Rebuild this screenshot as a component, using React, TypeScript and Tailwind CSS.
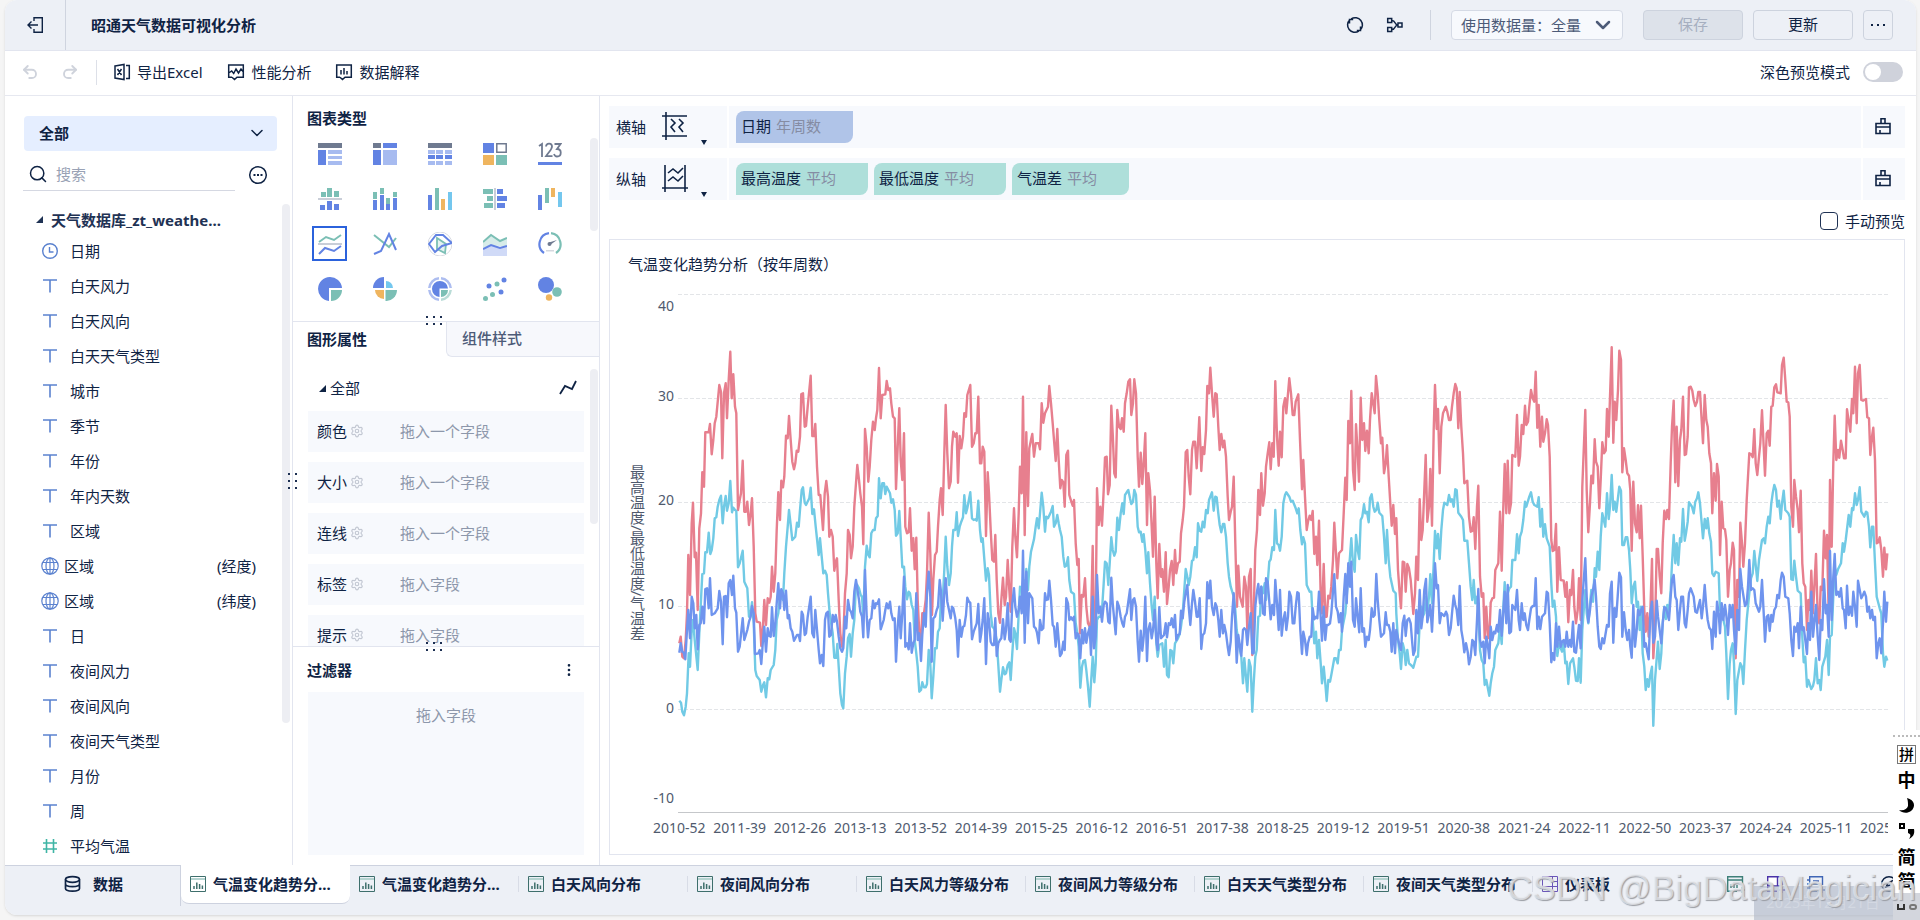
import { useState, type ReactNode } from 'react';
import { ChevronDown, Search, Undo2, Redo2, Settings, MoreVertical } from 'lucide-react';

type Block = { dx: number; dy: number; pts: string };

type Field = { name: string; kind: 'time' | 'text' | 'geo' | 'number'; suffix?: string };

const FIELDS: Field[] = [
  { name: '日期', kind: 'time' },
  { name: '白天风力', kind: 'text' },
  { name: '白天风向', kind: 'text' },
  { name: '白天天气类型', kind: 'text' },
  { name: '城市', kind: 'text' },
  { name: '季节', kind: 'text' },
  { name: '年份', kind: 'text' },
  { name: '年内天数', kind: 'text' },
  { name: '区域', kind: 'text' },
  { name: '区域', kind: 'geo', suffix: '(经度)' },
  { name: '区域', kind: 'geo', suffix: '(纬度)' },
  { name: '日', kind: 'text' },
  { name: '夜间风力', kind: 'text' },
  { name: '夜间风向', kind: 'text' },
  { name: '夜间天气类型', kind: 'text' },
  { name: '月份', kind: 'text' },
  { name: '周', kind: 'text' },
  { name: '平均气温', kind: 'number' },
];

const WEEKS = [
  '2010-52', '2011-39', '2012-26', '2013-13', '2013-52', '2014-39', '2015-25', '2016-12', '2016-51', '2017-38',
  '2018-25', '2019-12', '2019-51', '2020-38', '2021-24', '2022-11', '2022-50', '2023-37', '2024-24', '2025-11',
];

const SHEETS = [
  '气温变化趋势分析', '气温变化趋势分布', '白天风向分布', '夜间风向分布', '白天风力等级分布',
  '夜间风力等级分布', '白天天气类型分布', '夜间天气类型分布',
];

// weekly averages, three points per pixel, in blocks of several years
const HIGH: Block[] = [
  { dx: -78, dy: -14, pts: '238,1090 242,1070 247,1130 252,1135 257,1080 261,1000 265,825 270,945 275,730 279,668 284,832 288,818 293,990 298,745 303,700 307,577 312,620 316,457 326,457 330,432 335,523 340,480 344,430 349,410 358,315 363,335 367,535 372,340 377,310 381,415 386,300 391,215 395,355 400,283 405,380 409,400 414,690 419,660 423,640 428,542 433,695 438,695 442,665 447,735 452,700 456,655 461,800 466,1000 470,1025 480,1028 484,1098 489,1040 493,960 498,1035 503,955 508,968 512,950 516,860 521,935 526,880 530,750 535,637 540,720 544,602 549,622 553,590 558,467 563,475 567,408 572,480 577,545 582,568 586,550 590,512 595,515 600,470 604,342 609,340 614,440 618,438 623,380 632,287 637,468 642,468 646,432 651,560 656,645 661,645 669,750 674,640 679,603 684,650 688,770 693,750 698,770 703,872 707,845 711,835 716,960 721,1060 726,1100 730,1075 735,940 740,880 744,750 749,765 753,835 758,800 763,680 772,555 777,600 781,640 786,680 790,793 795,447 800,500 805,605 809,560 814,480 819,425 824,450 828,415 832,390 837,264 842,415 847,345 856,343 860,303 865,330 870,325 874,370 879,410 884,415 888,627 893,500 898,385 902,540 907,600 912,460 916,740 921,760 926,757 930,685 935,812 940,775 944,868 949,773 953,960 958,1060 963,1080 967,1000 972,1000 977,960 981,880 986,698 991,820 996,1005 1000,900 1005,825 1010,815 1014,740 1019,660 1023,625 1028,705 1033,520 1037,375 1042,520 1047,625 1052,605 1056,500 1060,455 1066,470 1070,460 1074,608 1079,468 1084,505 1089,470 1093,400 1098,410 1102,345 1111,315 1116,500 1121,490 1126,460 1130,460 1135,350 1140,550 1144,550 1148,500 1153,515 1158,768 1163,577 1167,640 1172,750 1177,840 1182,845 1186,765 1190,900 1195,1000 1200,1028 1204,960 1209,893 1214,975 1218,950 1223,840 1228,930 1232,995 1237,800 1242,685 1246,770 1251,832 1256,700 1260,560 1265,640 1269,350 1274,765 1279,457 1284,678 1288,505 1293,480 1297,462 1302,530 1307,490 1316,490 1320,508 1325,370 1330,428 1335,400 1344,380 1348,318 1353,370 1358,430 1362,480 1367,543 1372,447 1376,540' },
  { dx: 382, dy: 36, pts: '1,475 5,450 10,457 14,530 19,375 24,362 28,495 33,512 38,527 42,510 47,640 52,705 56,687 60,910 65,795 70,800 75,745 79,830 84,880 89,890 93,870 98,648 102,950 107,850 111,475 116,585 121,530 126,587 131,480 135,382 140,380 144,493 149,465 154,227 158,310 163,430 167,442 172,240 177,290 182,297 186,265 191,305 195,220 200,190 205,155 210,148 214,255 219,220 223,148 228,190 233,380 237,470 242,368 247,462 251,400 256,310 261,585 265,430 270,480 275,590 279,680 284,500 289,700 293,805 298,642 303,740 307,718 312,785 317,667 321,822 326,770 330,720 335,693 340,765 345,660 349,730 354,700 359,695 363,610 368,570 372,530 377,367 382,360 386,440 391,493 396,360 400,335 405,335 410,415 414,340 418,262 424,423 428,352 433,372 438,300 442,168 447,190 451,113 456,190 461,260 466,190 470,193 475,290 479,360 484,312 489,352 493,332 498,380 503,500 507,570 512,545 516,530 521,440 526,640 531,830 535,707 540,800 548,830 553,740 558,770 562,900 567,740 572,717 577,975 581,850 586,660 591,600 595,480 600,555 604,430 609,527 614,490 618,410 623,370 628,337 632,418 637,340 641,380 646,154 651,320 656,407 660,305 665,382 670,230 675,205 679,250 688,145 693,190 698,255 703,255 707,215 715,193 720,330 726,478 730,390 735,500 740,600 744,575 749,557 754,570 758,543 763,672 768,620 772,705 777,572 782,800 786,850 791,702 796,860 800,860 805,797 810,805 814,770 819,690 823,578 828,670 832,745 837,670 846,660 851,550 856,443 860,510 865,273 870,340 874,183 879,420 884,480 888,283 893,370 897,455 902,203 907,330 912,280 916,363 921,302 926,370 930,270 935,190 944,250 948,138 953,190 958,270 963,340 967,323 972,430 977,400 981,346 986,440 991,520 995,587 1000,525 1005,612 1009,565 1014,720 1019,790 1023,835 1028,695 1033,697 1037,785 1042,702 1047,715 1052,750 1056,800 1060,852 1065,790 1069,680 1074,750 1079,508 1084,630 1088,600 1093,480 1097,375 1102,575 1107,530 1111,417 1116,587 1121,300 1125,165 1130,297 1134,237 1139,430 1144,290 1149,250 1157,230 1162,245 1167,270 1172,270 1176,230 1181,190 1186,162 1190,175 1195,295 1199,186 1204,290 1209,370 1213,460 1222,452 1227,560 1232,605 1237,603 1241,562 1246,657 1251,530 1255,467 1260,740 1265,800 1270,790 1274,925 1279,830 1284,925 1288,920 1292,818 1297,805 1302,803 1306,720 1315,700 1320,545 1325,722 1329,560 1334,402 1339,550 1343,392 1348,550 1353,520 1357,375 1366,380 1371,255 1376,407' },
  { dx: 802, dy: 36, pts: '120,380 125,285 130,312 135,227 139,285 144,275 148,230 153,180 158,205 163,215 167,125 172,293 176,225 181,350 186,260 190,335 195,310 200,268 204,285 209,380 214,630 218,663 223,660 228,582 232,785 237,652 242,750 251,752 256,800 260,757 265,877 270,780 274,795 279,720 283,830 288,880 293,840 297,745 302,870 307,470 316,240 320,480 325,607 330,520 334,437 339,460 344,328 348,395 353,410 358,535 362,450 367,337 372,370 377,362 381,237 386,320 390,200 395,52 400,338 404,215 409,270 414,180 418,62 423,90 427,427 432,355 437,390 442,430 447,437 451,480 455,662 460,455 465,580 470,607 474,526 479,625 483,527 488,680 493,840 497,905 502,850 506,920 511,850 516,687 520,985 525,900 530,657 534,657 539,740 544,790 548,640 553,542 558,567 562,540 567,567 572,400 576,290 581,212 586,457 590,290 595,468 600,330 604,300 609,200 614,375 618,373 623,320 627,172 632,170 637,182 641,210 646,228 651,215 655,186 660,186 669,340 674,195 679,270 683,290 688,370 693,400 697,550 702,430 707,512 711,402 716,440 720,675 725,515 730,595 735,598 739,630 744,800 749,720 753,700 758,638 762,660 767,985 772,750 777,800 781,578 786,640 790,710 795,640 800,510 808,370 813,372 818,382 823,298 827,400 832,435 837,380 841,340 846,241 851,350 855,437 860,310 865,302 869,347 874,230 878,227 883,172 888,163 892,187 902,190 906,105 911,83 916,150 920,215 925,217 929,260 934,530 939,590 943,450 948,500 953,540 957,607 962,482 967,700 971,760 976,770 981,900 985,810 990,840 994,722 999,850 1008,672 1013,860 1018,880 1022,770 1027,780 1032,602 1037,685 1041,615 1046,860 1050,450 1055,650 1060,400 1064,257 1069,390 1074,360 1078,383 1083,332 1088,360 1092,385 1097,385 1101,238 1111,305 1116,207 1120,250 1125,110 1130,280 1134,130 1139,105 1144,210 1149,212 1158,207 1162,262 1167,265 1171,375 1176,320 1180,293 1185,390 1190,640 1195,637 1199,622 1204,660 1209,740 1213,653 1218,718 1222,670' },
];

const LOW: Block[] = [
  { dx: -78, dy: -14, pts: '238,1262 243,1268 247,1295 252,1306 257,1280 261,1240 266,1120 270,1160 275,1050 279,1020 284,1080 293,1170 298,1060 303,960 307,882 312,880 316,817 321,817 326,758 331,822 335,810 340,775 344,715 349,712 353,680 358,660 363,647 368,730 372,680 377,648 381,692 386,670 391,603 396,697 400,683 405,690 409,692 414,862 419,850 428,812 433,905 442,925 447,1010 452,1000 456,967 461,1030 466,1170 470,1188 479,1200 484,1235 489,1215 493,1207 498,1252 503,1195 508,1198 512,1170 521,1155 526,1110 530,1020 535,1000 540,950 549,960 553,880 558,800 563,740 567,690 572,735 577,780 586,770 591,728 596,740 600,690 605,630 609,622 614,668 618,675 628,655 632,623 637,702 642,688 647,740 656,825 660,775 665,830 670,880 675,872 680,885 684,940 689,1000 698,1060 703,1133 709,1133 712,1092 716,1160 721,1240 726,1275 730,1285 735,1180 740,1130 744,1075 749,1062 753,1130 758,1060 763,1020 768,912 772,915 777,925 782,945 786,950 790,1010 795,860 800,797 805,825 809,832 814,760 819,750 824,750 828,715 833,708 837,595 842,655 847,610 852,610 856,642 860,620 870,640 874,668 879,658 884,690 888,767 893,760 898,693 902,770 907,862 912,860 916,920 921,958 926,935 930,940 935,975 940,990 944,1080 949,1120 953,1160 958,1235 963,1230 967,1207 972,1222 977,1222 981,1212 986,1110 991,1150 995,1255 1000,1190 1005,1105 1010,1105 1014,1055 1019,1045 1023,950 1028,960 1033,870 1037,770 1042,860 1047,915 1052,880 1056,800 1060,750 1066,750 1070,697 1074,768 1079,740 1084,725 1089,712 1093,646 1098,700 1102,685 1111,637 1116,715 1121,720 1126,718 1130,722 1135,662 1140,750 1144,785 1148,775 1158,902 1163,865 1167,885 1172,1000 1177,1040 1182,1045 1186,1060 1190,1080 1200,1235 1204,1200 1209,1162 1214,1183 1218,1180 1223,1155 1228,1147 1232,1200 1237,1120 1242,1045 1246,1060 1251,1107 1256,1000 1260,920 1265,930 1270,900 1274,960 1279,867 1284,930 1288,860 1293,815 1302,778 1307,740 1311,715 1316,745 1320,700 1325,638 1330,680 1335,755 1339,710 1344,715 1353,695 1358,678 1362,740 1367,730 1372,705 1376,730' },
  { dx: 382, dy: 36, pts: '0,600 5,620 10,680 14,710 19,707 24,682 28,750 33,785 42,792 47,880 52,910 56,950 61,1073 66,1010 70,993 75,990 79,1020 84,1070 89,1130 93,1060 98,980 103,1057 107,1000 111,870 116,860 121,860 126,840 131,760 135,695 140,700 145,765 149,700 154,622 158,660 163,677 167,665 172,563 177,600 182,550 187,520 191,552 195,495 200,487 205,480 210,505 214,522 219,515 223,480 228,495 233,590 237,607 242,605 247,635 251,613 256,660 261,730 265,667 270,760 275,830 279,870 284,800 289,940 293,980 298,945 307,940 312,1010 317,930 321,1035 326,1042 331,960 335,962 340,1000 345,940 354,925 359,912 363,890 368,850 373,780 377,717 382,740 386,765 391,740 396,692 400,690 405,652 410,682 414,580 419,602 424,605 428,575 433,592 438,540 443,550 447,510 456,487 461,542 466,500 470,502 475,550 479,585 484,607 489,582 493,582 498,620 503,700 507,740 512,770 521,800 526,840 530,900 535,930 540,960 544,980 549,1060 553,985 562,1085 567,990 572,1010 577,1145 581,1060 586,980 590,960 595,860 600,857 604,770 609,790 614,760 618,810 623,760 628,695 632,688 637,652 642,660 646,540 651,640 656,645 660,662 665,620 670,520 675,495 679,487 688,500 693,515 698,512 707,535 712,550 716,535 721,600 726,643 730,622 735,640 740,765 749,785 754,785 758,870 763,940 768,905 772,985 777,930 782,1000 786,1060 791,1010 796,1060 800,1113 805,1050 810,1055 814,1035 823,985 828,985 833,1000 837,960 842,960 846,900 856,850 860,800 865,740 870,680 874,625 879,700 884,725 888,615 893,660 898,687 902,570 907,560 912,523 916,550 921,545 926,577 930,505 935,493 940,530 944,545 949,540 953,518 958,548 967,558 972,620 977,700 981,600 986,690 991,740 1000,782 1007,790 1009,850 1014,930 1019,970 1023,1017 1028,940 1033,960 1037,1005 1042,960 1047,1000 1056,1008 1060,1013 1069,980 1074,980 1079,880 1084,830 1088,860 1093,850 1098,800 1102,850 1107,800 1111,733 1116,820 1121,700 1125,603 1130,655 1134,612 1139,687 1144,600 1149,540 1153,518 1162,525 1167,495 1172,515 1176,508 1181,530 1186,478 1190,480 1195,548 1204,560 1209,570 1213,632 1222,632 1227,700 1232,770 1237,810 1241,750 1246,820 1251,800 1255,850 1260,960 1265,990 1270,1000 1274,1065 1279,1050 1288,1097 1292,1060 1297,1030 1302,1010 1306,960 1315,940 1320,890 1325,942 1329,850 1334,757 1339,855 1343,790 1348,775 1353,770 1357,690 1366,690 1371,613 1376,670' },
  { dx: 802, dy: 36, pts: '120,620 125,605 130,570 135,515 139,530 148,500 153,487 158,515 163,525 167,527 172,530 176,502 181,590 186,537 190,620 195,583 200,625 209,650 214,760 218,830 223,812 228,860 232,978 237,940 246,965 251,935 256,1000 260,995 265,1062 270,1000 279,985 283,1010 288,1052 293,1053 297,985 302,1058 307,900 312,830 316,780 320,850 325,880 334,780 339,815 344,715 348,740 353,665 358,720 362,620 367,550 376,590 381,490 386,567 390,530 395,435 400,540 404,515 409,545 418,470 423,482 427,645 432,645 437,622 442,622 447,660 451,720 455,820 460,770 465,755 470,830 474,815 479,900 483,830 488,970 493,1010 497,1080 502,1048 506,1070 511,1035 516,1010 520,1187 525,1050 530,985 534,935 539,1017 544,970 548,880 553,830 558,867 562,825 567,845 572,780 576,700 581,615 586,700 590,640 595,705 600,625 604,635 609,537 614,632 618,610 623,575 627,517 636,530 641,550 646,515 651,505 655,487 660,520 669,625 674,567 679,595 683,565 688,610 693,635 697,730 702,738 707,725 716,730 720,840 725,850 735,890 739,970 744,1107 749,1000 753,960 758,940 762,1000 767,1152 772,1050 781,1000 786,1010 790,1062 795,960 800,870 808,790 813,745 818,730 823,663 832,753 837,690 846,630 851,625 855,640 860,590 865,560 869,580 874,520 878,490 883,465 888,480 892,530 897,512 902,567 906,520 911,482 916,540 925,550 929,560 934,748 939,750 943,692 948,740 953,782 962,790 967,920 971,997 976,980 981,1070 985,1050 994,1077 999,1068 1003,1050 1008,985 1013,1060 1018,1050 1022,1080 1027,1010 1036,980 1041,930 1046,1035 1050,920 1055,915 1060,800 1064,710 1069,735 1074,718 1083,700 1088,640 1092,665 1097,630 1106,555 1111,590 1116,535 1120,540 1125,490 1130,525 1134,510 1139,472 1144,545 1153,560 1158,545 1162,548 1167,590 1171,652 1176,590 1180,590 1185,700 1190,800 1199,835 1204,850 1209,970 1213,1010 1218,980 1222,992' },
];

const DIFF: Block[] = [
  { dx: -78, dy: -14, pts: '238,1118 242,1090 247,1115 251,1118 256,1138 261,1050 265,990 270,1075 275,950 280,970 284,1045 289,1005 293,1108 298,1035 302,1030 307,980 312,1030 316,927 321,925 326,985 330,895 335,1005 344,1000 353,985 358,933 363,965 368,1093 372,950 377,948 381,1012 386,910 391,900 396,945 400,887 405,985 409,998 414,1115 419,1100 428,1015 433,1080 442,1050 447,1025 452,1010 456,978 461,1000 465,1122 475,1120 479,1110 484,1152 489,1080 493,1040 498,1115 503,1045 508,1068 512,1070 516,982 521,1068 526,1030 530,970 535,910 540,985 544,928 549,940 553,990 558,932 563,1015 567,1005 572,1045 577,1055 582,1082 591,1065 596,1065 600,1083 605,995 609,1005 614,1065 618,1060 623,1010 632,950 637,1060 642,1072 646,990 651,1050 656,1110 660,1150 665,1125 670,1158 675,1020 679,1000 684,995 688,1070 693,1065 698,1005 703,1025 707,1005 711,1025 716,1070 721,1105 726,1115 730,1105 735,1010 739,1045 744,960 749,990 753,995 758,1015 763,935 768,900 777,960 781,995 786,1010 790,1072 795,870 800,1010 804,1072 809,1020 814,1015 819,962 824,985 828,970 832,972 837,958 842,1048 851,1020 856,990 860,970 865,985 870,965 874,1000 879,1020 884,1015 888,1145 893,1040 898,980 902,1075 907,1000 912,890 916,1100 921,1090 926,1108 930,1030 935,1118 940,1090 944,1080 949,940 953,1080 958,1060 963,1143 967,1065 972,1000 977,1040 981,940 986,875 991,950 995,1145 1000,1015 1005,1010 1010,990 1014,980 1019,900 1023,935 1028,1022 1033,940 1037,895 1042,965 1047,990 1052,1015 1056,980 1060,985 1066,1015 1070,1050 1074,1130 1079,1020 1084,1070 1089,1040 1093,1038 1098,1005 1102,953 1107,965 1111,968 1116,1078 1121,1055 1130,1030 1135,972 1140,1085 1144,1060 1148,1020 1153,955 1158,1152 1163,1000 1167,1020 1172,1085 1177,1095 1182,1095 1186,1015 1190,1128 1195,1090 1200,1080 1204,1075 1209,1018 1214,1078 1218,1050 1223,970 1228,1078 1232,1085 1237,970 1242,925 1246,980 1251,1010 1256,990 1260,950 1265,1000 1269,812 1274,1088 1279,875 1284,1030 1288,940 1297,955 1302,1040 1307,1045 1311,1058 1316,1090 1320,1020 1325,1050 1330,1045 1335,940 1339,960 1344,958 1348,902 1353,960 1358,1035 1362,1040 1367,1100 1372,1030 1376,1080' },
  { dx: 382, dy: 36, pts: '0,978 5,970 10,935 14,960 19,805 24,820 28,870 33,862 38,870 42,860 47,925 52,910 56,915 61,985 66,900 70,940 75,895 79,938 84,910 89,890 93,975 98,800 102,955 107,920 111,735 116,850 121,830 126,875 131,825 135,815 140,820 145,875 149,880 154,743 158,820 163,870 167,913 172,815 177,830 182,860 187,880 191,890 195,860 200,850 205,815 210,778 214,870 219,810 223,805 228,830 233,935 237,995 242,902 247,962 251,920 256,800 261,993 265,900 270,880 275,925 279,900 284,840 289,930 293,960 298,832 303,925 312,915 317,880 321,922 326,880 331,885 335,865 340,892 345,855 349,930 354,915 359,912 363,842 368,865 373,815 377,790 382,765 386,830 391,885 396,820 400,780 405,815 410,860 414,860 419,805 424,957 428,915 433,910 438,880 442,757 447,805 451,752 456,830 461,855 466,820 470,830 475,870 479,920 484,840 489,910 493,885 498,910 503,950 507,975 512,935 516,860 521,790 526,880 530,998 535,915 544,977 549,900 553,895 558,900 562,945 567,890 572,850 577,970 581,970 586,830 590,790 595,762 600,820 604,770 609,850 614,855 618,745 623,755 628,815 632,868 637,825 642,855 646,750 651,820 656,900 660,780 665,917 670,870 675,847 679,900 684,860 688,785 693,800 698,880 703,880 707,830 712,787 716,790 721,900 726,972 730,905 735,930 740,975 744,940 749,920 754,920 758,835 763,868 768,860 772,865 777,785 782,860 786,932 791,830 796,930 800,885 805,885 810,880 814,850 823,733 828,830 833,845 837,877 842,850 846,905 851,800 856,732 860,820 865,700 870,770 874,695 879,870 884,890 888,805 893,860 898,907 902,775 907,905 912,895 916,950 921,920 926,930 930,900 935,835 940,860 944,855 949,732 953,810 958,870 963,920 972,910 977,847 981,885 986,885 991,905 995,965 1000,880 1005,970 1009,900 1014,925 1019,950 1023,960 1028,880 1033,857 1037,918 1042,870 1047,865 1052,880 1056,930 1060,975 1065,960 1069,840 1074,910 1079,780 1084,895 1088,860 1093,780 1098,747 1102,877 1107,850 1111,825 1116,905 1121,800 1125,700 1130,775 1134,765 1139,880 1144,850 1153,858 1158,845 1162,855 1167,915 1172,895 1176,850 1181,797 1186,825 1190,840 1195,885 1199,768 1204,900 1209,930 1213,967 1218,940 1223,965 1227,1003 1232,980 1237,930 1241,935 1246,975 1251,870 1255,777 1260,930 1265,950 1270,935 1274,1000 1279,920 1284,950 1288,985 1292,890 1297,930 1302,905 1306,910 1311,885 1315,905 1320,840 1325,917 1329,860 1334,785 1339,880 1343,765 1348,910 1353,905 1357,825 1366,840 1371,780 1376,870' },
  { dx: 802, dy: 36, pts: '120,900 125,820 130,870 134,850 139,885 144,900 148,870 153,835 158,828 163,828 167,745 172,897 176,860 181,897 186,860 195,850 200,785 204,790 209,880 214,997 218,970 223,990 228,880 232,950 237,890 242,950 246,935 251,930 256,950 260,905 265,950 270,930 274,950 279,875 283,965 288,968 293,920 297,885 302,955 307,810 316,685 320,800 325,877 330,840 334,800 339,780 344,750 348,800 353,890 358,950 362,957 367,925 372,940 381,885 386,890 390,790 395,755 400,938 404,835 409,860 418,728 423,742 427,920 432,847 437,900 442,930 447,900 451,950 455,983 460,825 465,950 470,900 474,840 479,855 483,840 488,830 493,950 497,940 506,988 511,850 516,815 520,938 525,920 530,812 534,860 544,940 548,880 553,832 558,835 562,850 567,870 572,800 576,750 581,735 586,800 590,810 595,900 600,840 604,800 609,800 614,880 618,892 623,840 627,790 632,775 641,800 646,845 651,848 655,830 660,810 665,865 669,830 674,765 679,830 683,870 688,893 693,900 697,957 702,845 707,920 711,815 716,850 720,910 725,820 730,870 735,825 739,855 744,915 749,825 753,862 758,825 762,900 767,972 772,840 777,900 781,717 786,770 795,828 800,820 804,770 808,690 813,780 818,775 823,780 827,820 837,845 841,830 846,750 851,850 855,935 860,860 865,855 869,903 874,855 878,875 883,840 888,830 892,795 897,805 902,750 906,728 911,740 916,800 925,805 929,850 934,930 939,978 943,890 948,905 953,880 957,955 962,830 967,900 971,892 976,930 981,972 985,880 990,930 994,785 999,920 1008,825 1013,920 1018,990 1022,870 1027,900 1032,748 1037,850 1041,825 1046,920 1050,663 1055,870 1060,740 1064,672 1069,795 1074,785 1078,800 1083,775 1088,835 1092,840 1097,895 1101,767 1106,855 1111,830 1116,857 1120,785 1125,830 1130,890 1134,752 1139,780 1144,805 1149,795 1153,785 1158,800 1162,845 1167,830 1171,865 1176,840 1180,870 1185,860 1190,985 1195,940 1199,925 1204,970 1209,880 1213,785 1218,875 1222,815' },
];

const toPoints = (blocks: Block[]) =>
  blocks
    .flatMap(({ dx, dy, pts }) =>
      pts.split(' ').map((p) => {
        const [x, y] = p.split(',').map(Number);
        return `${(x / 3 + dx).toFixed(1)},${(y / 3 + dy).toFixed(1)}`;
      })
    )
    .join(' ');

const B = '#6283e3';
const L = '#a7bbf0';
const G = '#7bbfb5';
const O = '#efb55f';
const C = '#74c7ee';
const D = '#6f7a90';

const CHART_TYPES: { name: string; icon: ReactNode }[] = [
  { name: '分组表', icon: <><path fill={D} d="M0 1h24v5H0z" /><path fill={B} d="M0 8h8v15H0z" /><path fill={L} d="M10 8h14v4H10zM10 14h14v3H10zM10 19h14v4H10z" /></> },
  { name: '交叉表', icon: <><path fill={D} d="M0 1h8v5H0z" /><path fill={B} d="M10 1h14v5H10zM0 8h8v15H0z" /><path fill={L} d="M10 8h14v15H10z" /></> },
  { name: '明细表', icon: <><path fill={D} d="M0 1h24v5H0z" /><path fill={L} d="M0 8h7v4H0zM8 8h7v4H8zM17 8h7v4h-7zM0 19h7v4H0zM8 19h7v4H8zM17 19h7v4h-7z" /><path fill={B} d="M0 13h7v4H0zM8 13h7v4H8zM17 13h7v4h-7z" /></> },
  { name: '颜色表格', icon: <><path fill={B} d="M0 1h11v10H0z" /><path fill="none" stroke={D} strokeWidth="1.5" d="M13.8 1.8h9.4v8.4h-9.4z" /><path fill={O} d="M0 13h11v10H0z" /><path fill={G} d="M13 13h11v10H13z" /></> },
  { name: '指标卡', icon: <><path fill="none" stroke={D} strokeWidth="1.8" d="M1 4l3-2v13M8 4.500c.5-4 6-3.500 6 0 0 3-3 5-6 9.700h6.500M16.500 2h6l-3.500 5c5 0 5 7.500 0 7.500-1.500 0-2.500-1-3-2.500" /><path fill={B} d="M0 20h24v3H0z" /></> },
  { name: '对比柱状图', icon: <><path fill={G} d="M3 5h5v5H3zM9 1h5v9H9zM16 4h5v6h-5z" /><path fill="#c9ced8" d="M0 11h24v2H0z" /><path fill={B} d="M2 18h5v5H2zM9 14h5v9H9zM16 17h5v6h-5z" /></> },
  { name: '堆积柱状图', icon: <><path fill={G} d="M0 5h4v7H0zM7 1h4v6H7zM13 11h4v6h-4zM20 5h4v5h-4z" /><path fill={B} d="M0 13h4v10H0zM7 8h4v15H7zM13 17h4v6h-4zM20 11h4v12h-4z" /></> },
  { name: '分区柱形图', icon: <><path fill={B} d="M0 8h4v15H0z" /><path fill={G} d="M7 1h4v22H7z" /><path fill={O} d="M13 12h4v11h-4z" /><path fill={C} d="M20 5h4v18h-4z" /></> },
  { name: '对比条形图', icon: <><path fill={G} d="M0 2h10v5H0zM4 9h6v5H4zM1 16h9v5H1z" /><path fill="#c9ced8" d="M11 1h2v22h-2z" /><path fill={B} d="M14 2h6v5h-6zM14 9h10v5H14zM14 16h8v5h-8z" /></> },
  { name: '瀑布图', icon: <><path fill={B} d="M0 8h4v15H0z" /><path fill={G} d="M7 1h4v15H7z" /><path fill={O} d="M13 1h4v9h-4z" /><path fill={C} d="M20 5h4v15h-4z" /></> },
  { name: '分区折线图', icon: <><path fill="#c9ced8" d="M0 11h24v2H0z" /><g fill="none" strokeWidth="2"><path stroke={G} d="M1 10l7-5 8 3 7-5" /><path stroke={B} d="M1 22l6-6 9 3 7-5" /></g></> },
  { name: '多系列折线图', icon: <g fill="none" strokeWidth="2"><path stroke={G} d="M1 3l15 12 7-9" /><path stroke={B} d="M1 22l7-3 8-17 7 16" /></g> },
  { name: '雷达图', icon: <g fill="none"><circle cx="12" cy="12" r="12" stroke="#d8dbe2" /><path fill={G} fillOpacity=".2" stroke={G} strokeWidth="1.8" d="M9 6l9 6-1 9-8-4z" /><path stroke={B} strokeWidth="2" d="M8 3h7l9 8-10 3-7 6-6-8z" /></g> },
  { name: '面积图', icon: <><path fill={G} fillOpacity=".3" d="M0 10l8-7 9 6 7-3v9L8 13l-8 3z" /><path fill={B} fillOpacity=".3" d="M0 17l8-4 9 3 7-2v10H0z" /><g fill="none" strokeWidth="2"><path stroke={G} d="M0 10l8-7 9 6 7-3" /><path stroke={B} d="M0 17l8-4 9 3 7-2" /></g></> },
  { name: '仪表盘', icon: <><g fill="none" strokeWidth="2.200"><path stroke={B} d="M6 21A11 11 0 0 1 11 1.200" /><path stroke={G} d="M13 1.200A11 11 0 0 1 18 21" /></g><circle cx="11.500" cy="12" r="2" fill={D} /><path fill={D} d="M11 10.500l8-2.500-7 5z" /><path fill="#d5d8df" d="M8 18h8v1.500H8z" /></> },
  { name: '饼图', icon: <><path fill={B} d="M11 12v12A12 12 0 1 1 24 11H11z" /><path fill={G} d="M13 13h11a11 11 0 0 1-11 11z" /></> },
  { name: '玫瑰图', icon: <><path fill={B} d="M11 11V0A11 11 0 0 0 0 11z" /><path fill={C} d="M13 11V4a7 7 0 0 1 7 7z" /><path fill={O} d="M11 13v9a9 9 0 0 1-9-9z" /><path fill={G} d="M12.500 13H24a11 11 0 0 1-11.500 11z" /></> },
  { name: '多层饼图', icon: <><g fill="none" strokeWidth="2.500"><path stroke="#adbdf0" d="M11 22.700A10.700 10.700 0 0 1 1.300 13M1.300 11A10.700 10.700 0 0 1 11 1.300M13 1.300A10.700 10.700 0 0 1 22.700 11" /><path stroke="#b9dcd7" d="M22.700 13A10.700 10.700 0 0 1 13 22.700" /></g><path fill={B} d="M11.500 12v8A8 8 0 1 1 20 11.500h-8.500z" /><path fill={G} d="M13 13h7a7 7 0 0 1-7 7z" /></> },
  { name: '散点图', icon: <><g fill={B}><circle cx="21" cy="3" r="2.500" /><circle cx="6" cy="9" r="2.500" /><circle cx="18" cy="15" r="2.500" /></g><g fill={G}><circle cx="14" cy="7" r="2.500" /><circle cx="9.500" cy="17.500" r="2.500" /><circle cx="2.500" cy="21.500" r="2.500" /></g></> },
  { name: '气泡图', icon: <><circle cx="8" cy="8" r="8" fill={B} /><circle cx="19" cy="15" r="4.800" fill={G} /><circle cx="11" cy="20.500" r="3.200" fill={O} /></> },
];

function Svg({ size = 16, children }: { size?: number; children: ReactNode }) {
  return (
    <svg width={size} height={size} viewBox={`0 0 ${size} ${size}`} fill="none" stroke="currentColor" className="shrink-0 overflow-visible" aria-hidden="true">
      {children}
    </svg>
  );
}

function FieldIcon({ kind }: { kind: Field['kind'] }) {
  if (kind === 'time') return <Svg><circle cx="8" cy="8" r="7.300" strokeWidth="1.400" /><path strokeWidth="1.400" d="M7.500 4v5h4" /></Svg>;
  if (kind === 'text') return <Svg><path strokeWidth="1.600" d="M1 2h14M8 2v12.500" /></Svg>;
  if (kind === 'number') return <Svg><path strokeWidth="1.600" d="M4.500 1v14M11.500 1v14M1 5h14M1 11h14" /></Svg>;
  return (
    <Svg>
      <circle cx="8" cy="8" r="8.200" strokeWidth="1.200" />
      <ellipse cx="8" cy="8" rx="4" ry="8.200" strokeWidth="1.200" />
      <path strokeWidth="1.200" d="M8 0v16M1 4.500h14M1 11.500h14" />
    </Svg>
  );
}

function BrushIcon() {
  return <Svg><path strokeWidth="1.600" d="M5 5.500V.8h4v4.700M0 5.500h14v10H0zM0 9h14M4 12v3" /></Svg>;
}

function SheetIcon() {
  return (
    <Svg>
      <path stroke="#3e6f6c" d="M.5.500h15v15H.5z" />
      <path stroke="#b5d3d0" strokeWidth="2" d="M1 3h14" />
      <path stroke="#3e6f6c" strokeWidth="1.500" d="M4 13v-3M6.800 13V6.500M9.600 13V8M12.400 13v-3.500" />
    </Svg>
  );
}

function Triangle() {
  return <svg width="7" height="7" className="shrink-0 fill-current" aria-hidden="true"><path d="M7 0v7H0z" /></svg>;
}

function Dots({ rows, cols }: { rows: number; cols: number }) {
  return (
    <svg width={cols * 7} height={rows * 7} aria-hidden="true" className="fill-[#1c2f52]">
      {Array.from({ length: rows * cols }, (_, i) => (
        <rect key={i} x={(i % cols) * 7 + 2} y={Math.floor(i / cols) * 7 + 2} width="2" height="2" />
      ))}
    </svg>
  );
}

function Header() {
  return (
    <header className="flex h-[51px] shrink-0 items-center border-b border-[#e2e5ef] bg-[#edf0f6]">
      <button aria-label="退出" className="flex h-full w-[61px] shrink-0 items-center justify-center border-r border-[#cfd4df]">
        <Svg><path strokeWidth="1.400" d="M7 4V.7h8.300v14.600H7V12M11 8H1M4.500 4.500L1 8l3.500 3.500" /></Svg>
      </button>
      <h1 className="ml-[25px] flex-1 font-bold">昭通天气数据可视化分析</h1>
      <div className="flex items-center gap-6">
        <button aria-label="刷新">
          <Svg><path strokeWidth="1.500" d="M4.200 1.800A7.300 7.300 0 0 1 13.200 13.200M13.500 9.500v4H9.800M11.800 14.200A7.300 7.300 0 0 1 2.800 2.800M2.500 6.500v-4h3.700" /></Svg>
        </button>
        <button aria-label="关系图">
          <Svg><path strokeWidth="1.500" d="M.7 1.500h4v4h-4zM.7 10.500h4v4h-4zM11 6h4v4h-4zM5 3.500c4 0 2 4.500 6 4.500M5 12.500c4 0 2-4.500 6-4.500" /></Svg>
        </button>
      </div>
      <div className="ml-[27px] h-[30px] w-px bg-[#cfd4df]" />
      <div className="relative ml-5">
        <select aria-label="使用数据量" className="h-[30px] w-[172px] appearance-none rounded-sm border border-[#d5dae5] bg-[#f7f9fd] pl-[9px] text-[#4d5b78]">
          <option>使用数据量：全量</option>
        </select>
        <ChevronDown size={24} strokeWidth={2.5} className="pointer-events-none absolute top-[3px] right-2 text-[#4d5b78]" />
      </div>
      <button disabled className="ml-5 h-[30px] w-[100px] rounded-sm border border-[#cdd3de] bg-[#dde2ea] pb-[2px] text-[#a6afc0]">保存</button>
      <button className="ml-[10px] h-[30px] w-[100px] rounded-sm border border-[#cdd3de] pb-[2px]">更新</button>
      <button aria-label="更多" className="mr-[23px] ml-[10px] flex h-[30px] w-[30px] items-center justify-center rounded-sm border border-[#cdd3de]">
        <Svg><path fill="currentColor" stroke="none" d="M1 7h2v2H1zM7 7h2v2H7zM13 7h2v2h-2z" /></Svg>
      </button>
    </header>
  );
}

function Toolbar() {
  return (
    <div className="flex h-[45px] shrink-0 items-center border-b border-[#e6e8f0] pb-[2px]">
      <button aria-label="撤销" className="ml-4 text-[#cfd3dc]"><Undo2 size={18} strokeWidth={2.5} /></button>
      <button aria-label="重做" className="ml-[22px] text-[#cfd3dc]"><Redo2 size={18} strokeWidth={2.5} /></button>
      <div className="ml-[17px] h-[25px] w-px bg-[#dde0e8]" />
      <button className="ml-[17px] flex items-center gap-[7px]">
        <Svg><path strokeWidth="1.500" d="M1 2l9-1.500v15L1 14zM3.500 5l4 6M7.500 5l-4 6M12 1.500h3.300v13H12" /></Svg>
        导出Excel
      </button>
      <button className="ml-[25px] flex items-center gap-2">
        <Svg><path strokeWidth="1.500" d="M4 13.300H.7V1h14.600v12.300H9L6.500 15.500 4 13.300M.7 9l3-2 2 2.500L8 5l2.500 4L13 5l2 2.500" /></Svg>
        性能分析
      </button>
      <button className="ml-6 flex items-center gap-2">
        <Svg><path strokeWidth="1.500" d="M4 13.300H.7V1h14.600v12.300H9L6.500 15.500 4 13.300M5 10.500V6M8 10.500V4M11 10.500V7" /></Svg>
        数据解释
      </button>
      <label className="mr-[13px] ml-auto flex items-center gap-[13px]">
        深色预览模式
        <input type="checkbox" className="peer sr-only" />
        <span className="flex h-5 w-10 items-center rounded-full bg-[#cfd2db] px-[2px] peer-checked:justify-end">
          <span className="h-4 w-4 rounded-full bg-white" />
        </span>
      </label>
    </div>
  );
}

function FieldPanel() {
  return (
    <aside className="relative w-[288px] shrink-0 border-r border-[#e2e5ef] pt-5">
      <div className="relative mr-[15px] ml-[19px]">
        <select aria-label="数据范围" className="h-[35px] w-full appearance-none rounded-sm bg-[#e5eeff] pb-[2px] pl-[15px] font-bold">
          <option>全部</option>
        </select>
        <ChevronDown size={20} strokeWidth={1.8} className="pointer-events-none absolute top-[7px] right-[10px]" />
      </div>
      <div className="mt-1 ml-[18px] flex h-9 items-center">
        <label className="flex h-full w-[212px] items-center gap-2 border-b border-[#d5d8e2] pt-[3px] pl-[5px]">
          <Search size={20} strokeWidth={1.8} />
          <input type="text" placeholder="搜索" aria-label="搜索" className="w-40 outline-none placeholder:text-[#99a2b5]" />
        </label>
        <button aria-label="更多" className="mt-1 ml-[15px]">
          <Svg>
            <circle cx="8" cy="8" r="8.300" strokeWidth="1.500" />
            <path fill="currentColor" stroke="none" d="M3.500 7h2v2h-2zM7 7h2v2H7zM10.500 7h2v2h-2z" />
          </Svg>
        </button>
      </div>
      <div className="mt-[11px] ml-[31px] flex h-[35px] items-center gap-2 font-bold text-[#1f3254]">
        <Triangle />
        天气数据库_zt_weathe...
      </div>
      <ul className="-mt-1">
        {FIELDS.map((field, i) => (
          <li key={i} className={`flex h-[35px] items-center pl-[37px] ${field.kind === 'geo' ? 'gap-[6px]' : 'gap-3'}`}>
            <span className={field.kind === 'number' ? 'text-[#3fb5a5]' : 'text-[#5b82cf]'}><FieldIcon kind={field.kind} /></span>
            <span>{field.name}</span>
            {field.suffix && <span className="mr-9 ml-auto">{field.suffix}</span>}
          </li>
        ))}
      </ul>
      <div className="absolute top-[108px] right-[2px] h-[519px] w-2 rounded-full bg-[#edeef3]" />
      <div className="absolute top-[375px] -right-2 z-10"><Dots rows={3} cols={2} /></div>
    </aside>
  );
}

const PROPERTIES = [
  { name: '颜色', hint: '拖入一个字段' },
  { name: '大小', hint: '拖入一个字段' },
  { name: '连线', hint: '拖入一个字段' },
  { name: '标签', hint: '拖入字段' },
  { name: '提示', hint: '拖入字段' },
];

function ConfigPanel() {
  const [chartType, setChartType] = useState('分区折线图');

  return (
    <section className="flex w-[307px] shrink-0 flex-col border-r border-[#e2e5ef]">
      <div className="relative h-[226px] shrink-0 border-b border-[#e2e5ef] pt-[11px]">
        <h2 className="ml-[14px] leading-[22px] font-bold">图表类型</h2>
        <div className="mt-[2px] ml-[9px] grid w-[275px] grid-cols-5">
          {CHART_TYPES.map(({ name, icon }) => (
            <button key={name} aria-label={name} onClick={() => setChartType(name)} className="flex h-[45px] items-center justify-center">
              <span className={`flex h-[35px] w-[35px] items-center justify-center border-2 ${name === chartType ? 'border-[#2b62dc]' : 'border-transparent'}`}>
                <svg width="24" height="24" viewBox="0 0 24 24" className="shrink-0">{icon}</svg>
              </span>
            </button>
          ))}
        </div>
        <div className="absolute top-[42px] right-[1px] h-[93px] w-2 rounded-full bg-[#edeef3]" />
        <div className="absolute -bottom-[7px] left-[131px] z-10"><Dots rows={2} cols={3} /></div>
      </div>
      <div className="relative flex h-[325px] shrink-0 flex-col overflow-hidden border-b border-[#e2e5ef]">
        <div className="flex h-[35px] shrink-0">
          <button className="w-[153px] pb-[2px] pl-[14px] text-left font-bold">图形属性</button>
          <button className="flex-1 rounded-bl-md border-b border-l border-[#e2e5ef] bg-[#f7f8fc] pb-[2px] pl-[15px] text-left font-medium text-[#4d5b78]">组件样式</button>
        </div>
        <div className="mt-3 mb-1 flex h-[38px] shrink-0 items-center gap-1 pr-[23px] pl-[26px]">
          <Triangle />
          全部
          <button aria-label="折线" className="ml-auto"><Svg><path strokeWidth="1.800" d="M0 14l5-8 7 3 4-8" /></Svg></button>
        </div>
        <ul className="ml-[15px] flex w-[276px] flex-col gap-[10px]">
          {PROPERTIES.map(({ name, hint }) => (
            <li key={name} className="flex h-[41px] shrink-0 items-center bg-[#f7f9fd] pb-[2px] pl-[9px]">
              {name}
              <button aria-label={`${name}设置`} className="ml-[3px] w-[50px] text-[#c3c8d3]"><Settings size={14} strokeWidth={2} /></button>
              <span className="text-[#8d97ab]">{hint}</span>
            </li>
          ))}
        </ul>
        <div className="absolute top-[47px] right-[1px] h-[155px] w-2 rounded-full bg-[#edeef3]" />
      </div>
      <div className="relative flex flex-1 flex-col pb-[10px]">
        <div className="absolute -top-[7px] left-[131px]"><Dots rows={2} cols={3} /></div>
        <div className="flex h-[45px] items-center justify-between pr-[22px] pl-[14px]">
          <h2 className="font-bold">过滤器</h2>
          <button aria-label="过滤器菜单"><MoreVertical size={16} /></button>
        </div>
        <div className="mr-[15px] ml-[15px] flex-1 bg-[#f7f9fd] pt-3 text-center text-[#8d97ab]">拖入字段</div>
      </div>
    </section>
  );
}

function Chip({ name, calc, className }: { name: string; calc: string; className: string }) {
  return (
    <button className={`flex h-8 shrink-0 items-center gap-[5px] rounded-tl-lg rounded-br-lg pb-[2px] pl-[5px] ${className}`}>
      {name}
      <span className="text-[#858ca3]">{calc}</span>
    </button>
  );
}

function AxisRow({ label, icon, children }: { label: string; icon: ReactNode; children: ReactNode }) {
  return (
    <div className="flex h-[42px] bg-[#f7f9fd]">
      <div className="flex w-[120px] shrink-0 items-center border-r-2 border-white pl-[7px]">
        {label}
        <button className="ml-4 flex h-full items-end gap-[11px] pt-[5px] pb-[3px]" aria-label={`${label}样式`}>
          <svg width="28" height="28" fill="none" stroke="currentColor" strokeWidth="1.600" className="mb-[5px]">{icon}</svg>
          <svg width="6" height="5" className="fill-current"><path d="M0 0h6L3 5z" /></svg>
        </button>
      </div>
      <div className="flex flex-1 items-center gap-[6px] pb-px pl-[7px]">{children}</div>
      <button aria-label={`清空${label}`} className="flex w-[44px] shrink-0 items-center justify-center border-l-2 border-white pb-[2px]"><BrushIcon /></button>
    </div>
  );
}

function Chart() {
  return (
    <section className="flex min-h-0 flex-1 flex-col border border-[#e2e5ef]">
      <h2 className="h-[54px] shrink-0 pt-[13px] pl-[18px] text-[15px] leading-[22px]">气温变化趋势分析（按年周数）</h2>
      <div className="flex min-h-0 flex-1 pr-4">
        <div className="flex w-[38px] items-center justify-end text-[#4f5a6e]">
          <span className="leading-[22px] whitespace-nowrap [writing-mode:vertical-rl]">最高温度/最低温度/气温差</span>
        </div>
        <div className="flex w-[26px] flex-col pt-[2px] pb-1 text-right text-[14px] leading-5 text-[#4f5a6e]">
          <span>40</span>
          <div className="my-[70px] flex flex-1 flex-col justify-between">
            <span>30</span>
            <span>20</span>
            <span>10</span>
            <span>0</span>
          </div>
          <span>-10</span>
        </div>
        <svg viewBox="0 0 1210 518" preserveAspectRatio="none" className="ml-1 h-full min-w-0 flex-1 overflow-visible" role="img" aria-label="气温变化趋势">
          {[0, 104, 208, 312, 415].map((y) => (
            <path key={y} d={`M0 ${y + 0.5}h1210`} stroke="#e3e5e8" strokeDasharray="4 2" />
          ))}
          <path d="M0 518.500h1210" stroke="#c5c7ca" />
          <g fill="none" strokeWidth="2.400" strokeLinejoin="round">
            <polyline points={toPoints(HIGH)} stroke="#e77f8e" />
            <polyline points={toPoints(LOW)} stroke="#71cae5" />
            <polyline points={toPoints(DIFF)} stroke="#6f94ee" />
          </g>
        </svg>
      </div>
      <div className="flex h-[42px] shrink-0 items-center overflow-hidden pr-4 pb-[10px] pl-[43px] text-[14px] whitespace-nowrap text-[#4f5a6e]">
        <div className="grid flex-1 grid-cols-20">
          {WEEKS.map((week) => <span key={week}>{week}</span>)}
        </div>
        <span className="w-7 overflow-hidden">2025-50</span>
      </div>
    </section>
  );
}

function SheetTabs() {
  return (
    <footer className="flex h-[50px] shrink-0 border-t border-[#cdd2df] bg-[#edf0f6] font-bold">
      <button className="flex h-10 w-[176px] shrink-0 items-center gap-3 border-r border-[#cdd2df] pb-1 pl-[60px]">
        <Svg>
          <ellipse cx="7.500" cy="3.500" rx="7" ry="2.800" strokeWidth="1.700" />
          <path strokeWidth="1.700" d="M.5 3.500v9c0 3.500 14 3.500 14 0v-9M.5 8c0 3.500 14 3.500 14 0" />
        </Svg>
        数据
      </button>
      {SHEETS.map((sheet, i) => (
        <button
          key={sheet}
          className={`flex h-[39px] w-[169px] shrink-0 items-center gap-[7px] pl-[9px] ${
            i === 0 ? '-mt-px rounded-b-lg border-b border-[#cdd2df] bg-white' : 'pb-[3px]'
          }`}
        >
          <SheetIcon />
          <span className="w-[124px] truncate text-left">{i < 2 ? '气温变化趋势分...' : sheet}</span>
          {i > 0 && <span className="ml-auto h-4 w-px bg-[#d8dce6]" />}
        </button>
      ))}
      <button className="flex h-[39px] shrink-0 items-center gap-[7px] pb-[3px] pl-[9px]">
        <Svg><path stroke="#6a56b8" d="M.5.500h15v15H.5zM.5 10.500h15M10.500.500v15M10.500 5.500h5" /></Svg>
        仪表板
      </button>
      <div className="mr-[19px] ml-auto flex h-[39px] items-center gap-6 pb-[3px]">
        <button aria-label="添加组件"><Svg><path stroke="#3e7f78" strokeWidth="1.400" d="M15.500 9V.7H.7v14.600H10M.7 4h14.600M4 12V8M7 12V6.500M10 12V9M15 11v6M12 14h6" /></Svg></button>
        <button aria-label="添加仪表板"><Svg><path fill="#fff" stroke="none" d="M1 1h9v9H1z" /><path stroke="#4a32a8" strokeWidth="1.400" d="M15.500 9V.7H.7v14.600H10M.7 10H15M10.500 1v9M15 11v6M12 14h6" /></Svg></button>
        <button aria-label="添加分析文档"><Svg><path stroke="#3f65b5" strokeWidth="1.400" d="M15.500 9V.7H2.700v14.600H10M0 4h3M0 8h3M0 12h3M6 5h6M6 8h6M15 11v6M12 14h6" /></Svg></button>
        <button aria-label="定位" className="ml-[34px]"><Svg><circle cx="8" cy="8" r="7.300" strokeWidth="1.500" /><path strokeWidth="1.500" d="M5 11l2-4 4-2-2 4z" /></Svg></button>
      </div>
    </footer>
  );
}

// floating input method bar docked to the screen edge
function ImeBar() {
  return (
    <div className="absolute right-0 bottom-0 flex h-[190px] w-[27px] flex-col items-center bg-white text-[18px] leading-[26px] font-bold text-black">
      <div className="mt-[5px] w-full border-t-2 border-dotted border-[#bbb]" />
      <span className="mt-2 flex h-[19px] w-[19px] items-center justify-center border border-[#777] pb-px text-[15px] font-medium">拼</span>
      <span className="mt-[3px]">中</span>
      <svg width="18" height="26" className="shrink-0"><path d="M9 5c8 2 9 9 4 13-4 3-9 2-12-1 5 1 8-1 9-4 0-3 0-5-1-8z" /></svg>
      <svg width="18" height="26" className="shrink-0" fill="none" stroke="black" strokeWidth="2"><path d="M2 5h4v4H2z" /><path fill="black" stroke="none" d="M10 10h6c1 5-1 8-5 10 2-3 2-5-1-6z" /></svg>
      <span className="leading-[24px]">简</span>
      <span className="leading-[24px]">简</span>
      <div className="flex w-full flex-1 items-center justify-center gap-1 bg-[#d3d6dd]">
        <span className="h-[6px] w-2 border-2 border-t-0 border-[#333]" />
        <span className="h-[6px] w-2 rounded-full border-2 border-[#777]" />
      </div>
    </div>
  );
}

export default function App() {
  return (
    <div className="relative flex h-screen overflow-hidden bg-[#f5f5f5] pr-1 pb-[5px] pl-[5px] font-['Noto_Sans','Noto_Sans_CJK_SC',sans-serif] text-[15px] leading-[22px] text-[#0f2344]">
      <div className="flex min-w-0 flex-1 flex-col overflow-hidden rounded-xl bg-white shadow">
        <Header />
        <Toolbar />
        <div className="flex min-h-0 flex-1">
          <FieldPanel />
          <ConfigPanel />
          <main className="flex min-w-0 flex-1 flex-col pt-[10px] pr-[11px] pb-[10px] pl-[9px]">
            <AxisRow label="横轴" icon={<path d="M4 0v28M0 4h25M0 24h25M9 7l4 4-4 4 4 5M17 7l4 4-4 4 4 5" />}>
              <Chip name="日期" calc="年周数" className="w-[117px] bg-[#b0c4e8]" />
            </AxisRow>
            <div className="h-[10px]" />
            <AxisRow label="纵轴" icon={<path d="M3 1v27M23 1v27M0 24h26M6 9l5-4 5 4 5-5M6 17l5-4 5 4 5-5" />}>
              <Chip name="最高温度" calc="平均" className="w-[132px] bg-[#aedfda]" />
              <Chip name="最低温度" calc="平均" className="w-[132px] bg-[#aedfda]" />
              <Chip name="气温差" calc="平均" className="w-[117px] bg-[#aedfda]" />
            </AxisRow>
            <label className="flex h-[39px] items-center justify-end gap-[7px] pt-[3px]">
              <input type="checkbox" className="h-[18px] w-[18px] appearance-none rounded-sm border border-[#1f3254] checked:bg-[#2b62dc]" />
              手动预览
            </label>
            <Chart />
          </main>
        </div>
        <SheetTabs />
      </div>
      <div className="pointer-events-none absolute right-[27px] bottom-0 h-[34px] w-[139px] bg-[#aeb6c6]/60 pt-[5px] pl-3 text-[#d3d8e2]">2025年12月21日</div>
      <ImeBar />
      <div className="pointer-events-none absolute right-1 bottom-3 font-['Liberation_Sans',sans-serif] text-[35px] leading-10 whitespace-nowrap text-[#eceef2]/70 [text-shadow:1px_1px_1px_#9a9da4]">
        CSDN @BigDataMagician
      </div>
    </div>
  );
}
